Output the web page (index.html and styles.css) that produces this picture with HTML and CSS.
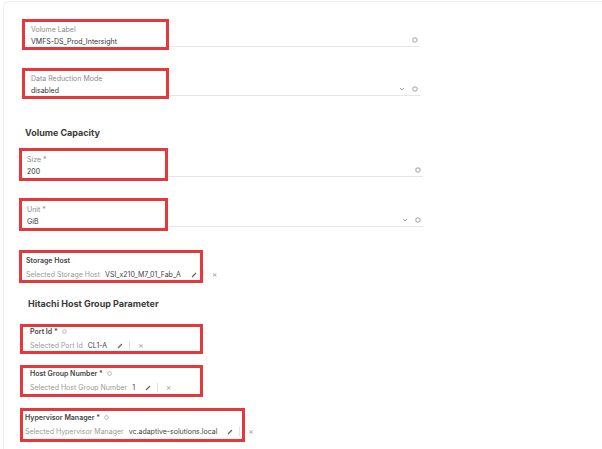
FILE: index.html
```html
<!DOCTYPE html>
<html lang="en">
<head>
<meta charset="UTF-8" />
<meta name="viewport" content="width=device-width, initial-scale=1" />
<title>Volume Settings</title>
<link rel="stylesheet" href="styles.css">
</head>
<body>

  <div class="panel">

    <div class="field field-first">
      <div class="mark">
        <div class="label">Volume Label</div>
        <div class="value">VMFS-DS_Prod_Intersight</div>
      </div>
      <div class="tools">
        <svg class="info" viewBox="0 0 6 6"><circle cx="3" cy="3" r="2.2" /></svg>
      </div>
    </div>

    <div class="field">
      <div class="mark">
        <div class="label">Data Reduction Mode</div>
        <div class="value">disabled</div>
      </div>
      <div class="tools">
        <svg class="chevron" viewBox="0 0 6 4"><path d="M1 1 L3 3 L5 1" /></svg>
        <svg class="info" viewBox="0 0 6 6"><circle cx="3" cy="3" r="2.2" /></svg>
      </div>
    </div>

    <h2 class="section section-capacity">Volume Capacity</h2>

    <div class="field field-wide field-after-title">
      <div class="mark">
        <div class="label">Size *</div>
        <div class="value">200</div>
      </div>
      <div class="tools">
        <svg class="info" viewBox="0 0 6 6"><circle cx="3" cy="3" r="2.2" /></svg>
      </div>
    </div>

    <div class="field field-wide">
      <div class="mark">
        <div class="label">Unit *</div>
        <div class="value">GiB</div>
      </div>
      <div class="tools">
        <svg class="chevron" viewBox="0 0 6 4"><path d="M1 1 L3 3 L5 1" /></svg>
        <svg class="info" viewBox="0 0 6 6"><circle cx="3" cy="3" r="2.2" /></svg>
      </div>
    </div>

    <div class="pick pick-storage">
      <div class="pick-label">Storage Host</div>
      <div class="pick-row">
        <span class="pick-name">Selected Storage Host</span>
        <span class="pick-value">VSI_x210_M7_01_Fab_A</span>
        <svg class="pencil" viewBox="0 0 6 6"><path d="M1 5 L5 1" /></svg>
        <span class="divider"></span>
        <span class="close">×</span>
      </div>
    </div>

    <h2 class="section section-hitachi">Hitachi Host Group Parameter</h2>

    <div class="pick pick-port">
      <div class="pick-label">Port Id * <svg class="info" viewBox="0 0 6 6"><circle cx="3" cy="3" r="2.2" /></svg></div>
      <div class="pick-row">
        <span class="pick-name">Selected Port Id</span>
        <span class="pick-value">CL1-A</span>
        <svg class="pencil" viewBox="0 0 6 6"><path d="M1 5 L5 1" /></svg>
        <span class="divider"></span>
        <span class="close">×</span>
      </div>
    </div>

    <div class="pick pick-group">
      <div class="pick-label">Host Group Number * <svg class="info" viewBox="0 0 6 6"><circle cx="3" cy="3" r="2.2" /></svg></div>
      <div class="pick-row">
        <span class="pick-name">Selected Host Group Number</span>
        <span class="pick-value">1</span>
        <svg class="pencil" viewBox="0 0 6 6"><path d="M1 5 L5 1" /></svg>
        <span class="divider"></span>
        <span class="close">×</span>
      </div>
    </div>

    <div class="pick pick-hyper">
      <div class="pick-label">Hypervisor Manager * <svg class="info" viewBox="0 0 6 6"><circle cx="3" cy="3" r="2.2" /></svg></div>
      <div class="pick-row">
        <span class="pick-name">Selected Hypervisor Manager</span>
        <span class="pick-value">vc.adaptive-solutions.local</span>
        <svg class="pencil" viewBox="0 0 6 6"><path d="M1 5 L5 1" /></svg>
        <span class="divider"></span>
        <span class="close">×</span>
      </div>
    </div>

  </div>

</body>
</html>
```

FILE: styles.css
```css
html, body {
  margin: 0;
  background: #fff;
  overflow: hidden;
}
body {
  font-family: Inter, "Noto Sans", sans-serif;
  font-size: 7px;
  color: #333;
}
.panel {
  box-sizing: border-box;
  margin: 1px 0 0 3px;
  height: 448px;
  border-top: 1px solid #eeeeee;
  border-left: 1px solid #eeeeee;
  border-top-left-radius: 6px;
  padding-top: 17px;
}

/* underlined inputs */
.field {
  display: flex;
  align-items: flex-end;
  width: 398px;
  margin: 21px 0 0 18px;
  border-bottom: 1px solid #e6e6e6;
}
.field-first {
  margin-top: 0;
}
.mark {
  position: relative;
  box-sizing: border-box;
  width: 147px;
  height: 31px;
  margin-bottom: -4px;
  padding: 2.5px 0 0 6px;
  border: 3px solid #e5383c;
  background: #fff;
}
.field-wide {
  width: 404px;
  margin-left: 15px;
}
.field-after-title {
  margin-top: 9px;
}
.field-wide .mark {
  width: 149px;
  height: 33px;
  margin-bottom: -5px;
  padding: 4px 0 0 5px;
}
.label {
  line-height: 9px;
  color: #8c8c8c;
}
.value {
  margin-top: 3px;
  line-height: 9px;
  color: #333;
}
.tools {
  margin-left: auto;
  display: flex;
  align-items: center;
  gap: 7px;
  padding: 0 2px 3px 0;
}
.info {
  flex-shrink: 0;
  width: 6px;
  height: 6px;
  fill: none;
  stroke: #b5b5b5;
  stroke-width: 1.2;
}
.chevron {
  width: 6px;
  height: 4px;
  fill: none;
  stroke: #999;
  stroke-width: 0.9;
}

/* section titles */
.section {
  margin: 0;
  font-size: 9px;
  line-height: 12px;
  font-weight: 700;
  color: #3a3a3a;
}
.section-capacity {
  margin: 31px 0 0 21px;
}
.section-hitachi {
  margin: 15px 0 0 24px;
}

/* selected-item pickers */
.pick {
  box-sizing: border-box;
  width: 184px;
  margin-left: 15px;
  border: 3px solid #e5383c;
  white-space: nowrap;
}
.pick-storage {
  height: 33px;
  margin-top: 23px;
  padding: 3px 0 0 4px;
}
.pick-port {
  width: 183px;
  height: 30px;
  margin: 14px 0 0 16px;
  padding: 0 0 0 7px;
}
.pick-group {
  width: 183px;
  height: 32px;
  margin: 11px 0 0 16px;
  padding: 1px 0 0 7px;
}
.pick-hyper {
  width: 225px;
  height: 34px;
  margin: 11px 0 0 16px;
  padding: 2px 0 0 2px;
}
.pick-label {
  display: flex;
  align-items: center;
  gap: 4px;
  line-height: 9px;
  font-weight: 600;
  color: #444;
}
.pick-label .info {
  width: 5px;
  height: 5px;
}
.pick-row {
  display: flex;
  align-items: center;
  margin-top: 5px;
  line-height: 9px;
}
.pick-row > * {
  flex-shrink: 0;
}
.pick-name {
  color: #9a9a9a;
}
.pick-value {
  margin-left: 5px;
  color: #444;
}
.pencil {
  width: 6px;
  height: 6px;
  margin-left: 10px;
  fill: none;
  stroke: #666;
  stroke-width: 1.3;
}
.divider {
  width: 1px;
  height: 9px;
  margin-left: 6px;
  background: #e2e2e2;
}
.close {
  margin-left: 8px;
  color: #999;
  font-size: 8px;
}
```
